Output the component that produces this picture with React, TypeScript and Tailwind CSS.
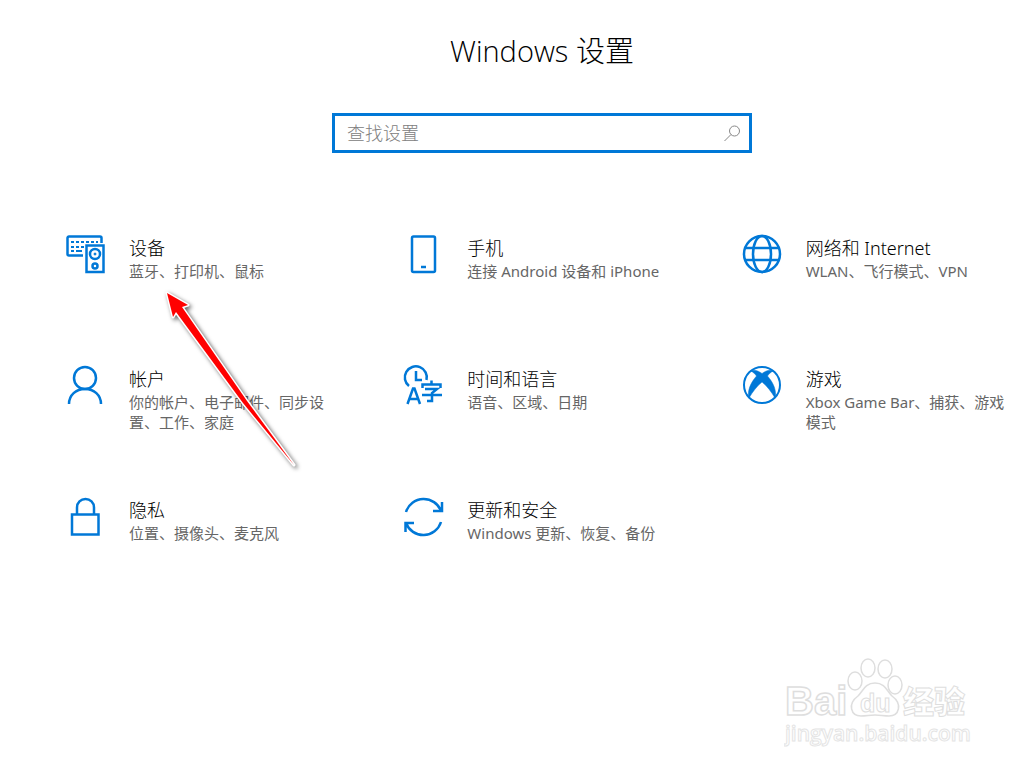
import type { ReactNode } from "react";

type Category = {
  title: string;
  detail: string;
  icon: ReactNode;
};

const categories: Category[] = [
  {
    title: "设备",
    detail: "蓝牙、打印机、鼠标",
    icon: (
      <>
        <path d="M17 20.500H3A1.500 1.500 0 0 1 1.500 19V3A1.500 1.500 0 0 1 3 1.500H34A1.500 1.500 0 0 1 35.500 3V8" />
        <path d="M5 7H32" strokeDasharray="3 2" strokeWidth="2" />
        <path d="M5 12H8M10 12H13M15 12H18M5 16H8M10 16H16" strokeWidth="2" />
        <path d="M20.500 10.500H37.500V37H20.500Z" />
        <circle cx="29" cy="19" r="5" />
        <circle cx="29" cy="19" r="1" strokeWidth="1" fill="currentColor" />
        <circle cx="29" cy="31" r="2.500" />
      </>
    ),
  },
  {
    title: "手机",
    detail: "连接 Android 设备和 iPhone",
    icon: (
      <>
        <rect x="8" y="1.500" width="23" height="35.500" rx="1.500" />
        <path d="M17 32H22" />
      </>
    ),
  },
  {
    title: "网络和 Internet",
    detail: "WLAN、飞行模式、VPN",
    icon: (
      <>
        <circle cx="19" cy="19" r="18" />
        <ellipse cx="19" cy="19" rx="9" ry="18" />
        <path d="M3 13H35M3 25H35" />
      </>
    ),
  },
  {
    title: "帐户",
    detail: "你的帐户、电子邮件、同步设置、工作、家庭",
    icon: (
      <>
        <circle cx="19" cy="12" r="11" />
        <path d="M3 38C3 29 10 23 19 23S35 29 35 38" />
      </>
    ),
  },
  {
    title: "时间和语言",
    detail: "语音、区域、日期",
    icon: (
      <>
        <path d="M5 20A11 11 0 1 1 22.500 14" />
        <path d="M12 5V14H18" />
        <path d="M3.500 38L9 22.500H10.500L16 38M6 33H14" />
        <path d="M18.500 22V18.500H36.500V22M27.500 14.500V18M21 23H33L28 27V35H23M18 29H38" />
      </>
    ),
  },
  {
    title: "游戏",
    detail: "Xbox Game Bar、捕获、游戏模式",
    icon: (
      <>
        <circle cx="19" cy="19" r="18" strokeWidth="2" />
        <path
          d="M7.500 5C11.500 3 15.500 5 19 7.500C22.500 5 26.500 3 30.500 5C27.500 6 26 8 24.500 10C30.500 17 34 25 32 32C28.500 26 24 20 19 16C14 20 9.500 26 6 32C4 25 7.500 17 13.500 10C12 8 10.500 6 7.500 5Z"
          fill="currentColor"
          strokeWidth="0.500"
        />
      </>
    ),
  },
  {
    title: "隐私",
    detail: "位置、摄像头、麦克风",
    icon: (
      <>
        <path d="M6 17.500H32.500V37.500H6Z" />
        <path d="M11 17V10.500A8.500 8.500 0 0 1 28 10.500V17" />
      </>
    ),
  },
  {
    title: "更新和安全",
    detail: "Windows 更新、恢复、备份",
    icon: (
      <>
        <path d="M2 15A18.500 18.500 0 0 1 37 14M38 5V14H29" />
        <path d="M37 25A18.500 18.500 0 0 1 2 26M1.500 35V26H10" />
      </>
    ),
  },
];

function CategoryLink({ title, detail, icon }: Category) {
  return (
    <a href="#" className="flex min-h-[91px] gap-6">
      <svg
        viewBox="0 0 39 39"
        className="size-[39px] shrink-0 overflow-visible text-[#0078d7]"
        fill="none"
        stroke="currentColor"
        strokeWidth="2.500"
        aria-hidden="true"
      >
        {icon}
      </svg>
      <div>
        <h2 className="text-lg leading-[26px] font-light text-black">{title}</h2>
        <p className="text-[15px] leading-5 text-[#666666]">{detail}</p>
      </div>
    </a>
  );
}

function Arrow() {
  return (
    <svg
      viewBox="0 0 150 195"
      className="pointer-events-none absolute top-[282px] left-[155px] h-[195px] w-[150px] drop-shadow-[2px_2px_2px_rgba(0,0,0,0.6)]"
      aria-hidden="true"
    >
      <path
        d="M12 11L33 23L27 25L92 119L139 183L88 121L21 30L18 35Z"
        fill="#ff0000"
        stroke="#ffffff"
        strokeWidth="3"
        strokeLinejoin="round"
        paintOrder="stroke"
      />
    </svg>
  );
}

function Watermark() {
  return (
    <svg
      viewBox="0 0 190 95"
      className="pointer-events-none absolute right-[50px] bottom-[18px] h-[95px] w-[190px]"
      fill="#ffffff"
      stroke="#dedede"
      strokeWidth="1.500"
      fontFamily="'Open Sans', 'Noto Sans CJK SC', sans-serif"
      aria-hidden="true"
    >
      <text x="1" y="60" fontSize="40" fontWeight="700" fontFamily="'Liberation Sans', sans-serif">Bai</text>
      <ellipse cx="71" cy="26" rx="7" ry="9" />
      <ellipse cx="84" cy="13" rx="7" ry="9" />
      <ellipse cx="101" cy="14" rx="7" ry="9" />
      <ellipse cx="111" cy="30" rx="7" ry="9" />
      <path d="M91 28C81 28 79 36 74 41C63 49 67 61 77 61C82 61 86 60 91 60S100 61 105 61C115 61 119 49 108 41C103 36 101 28 91 28Z" />
      <text x="76" y="57" fontSize="25" fontWeight="700" strokeWidth="1" fontFamily="'Liberation Sans', sans-serif">du</text>
      <text x="119" y="58" fontSize="31" fontWeight="900" strokeWidth="1">经验</text>
      <text x="1" y="86" fontSize="21" fontWeight="600" strokeWidth="1" stroke="#e4e4e4">jingyan.baidu.com</text>
    </svg>
  );
}

export default function App() {
  return (
    <main className="relative min-h-screen bg-white pt-[31px] pb-32 font-['Noto_Sans','Noto_Sans_CJK_SC',sans-serif]">
      <header className="flex flex-col items-center pl-[60px]">
        <h1 className="font-['Open_Sans','Noto_Sans_CJK_SC',sans-serif] text-[29px] leading-10 font-light text-black">
          Windows 设置
        </h1>
        <label className="mt-[42px] flex h-10 w-[420px] items-center border-3 border-[#0078d7] pr-2 pl-3">
          <input
            type="text"
            aria-label="查找设置"
            placeholder="查找设置"
            className="min-w-0 flex-1 text-lg leading-6 font-light outline-none placeholder:text-[#808080]"
          />
          <svg viewBox="0 0 18 18" className="size-[18px]" fill="none" stroke="#888888" aria-hidden="true">
            <circle cx="11.500" cy="7" r="5" />
            <path d="M8 10.500L1.500 17" />
          </svg>
        </label>
      </header>

      <nav className="mt-[82px] grid grid-cols-3 gap-x-[68px] gap-y-10 pr-[11px] pl-[66px]">
        {categories.map((category) => (
          <CategoryLink key={category.title} {...category} />
        ))}
      </nav>

      <Arrow />
      <Watermark />
    </main>
  );
}
